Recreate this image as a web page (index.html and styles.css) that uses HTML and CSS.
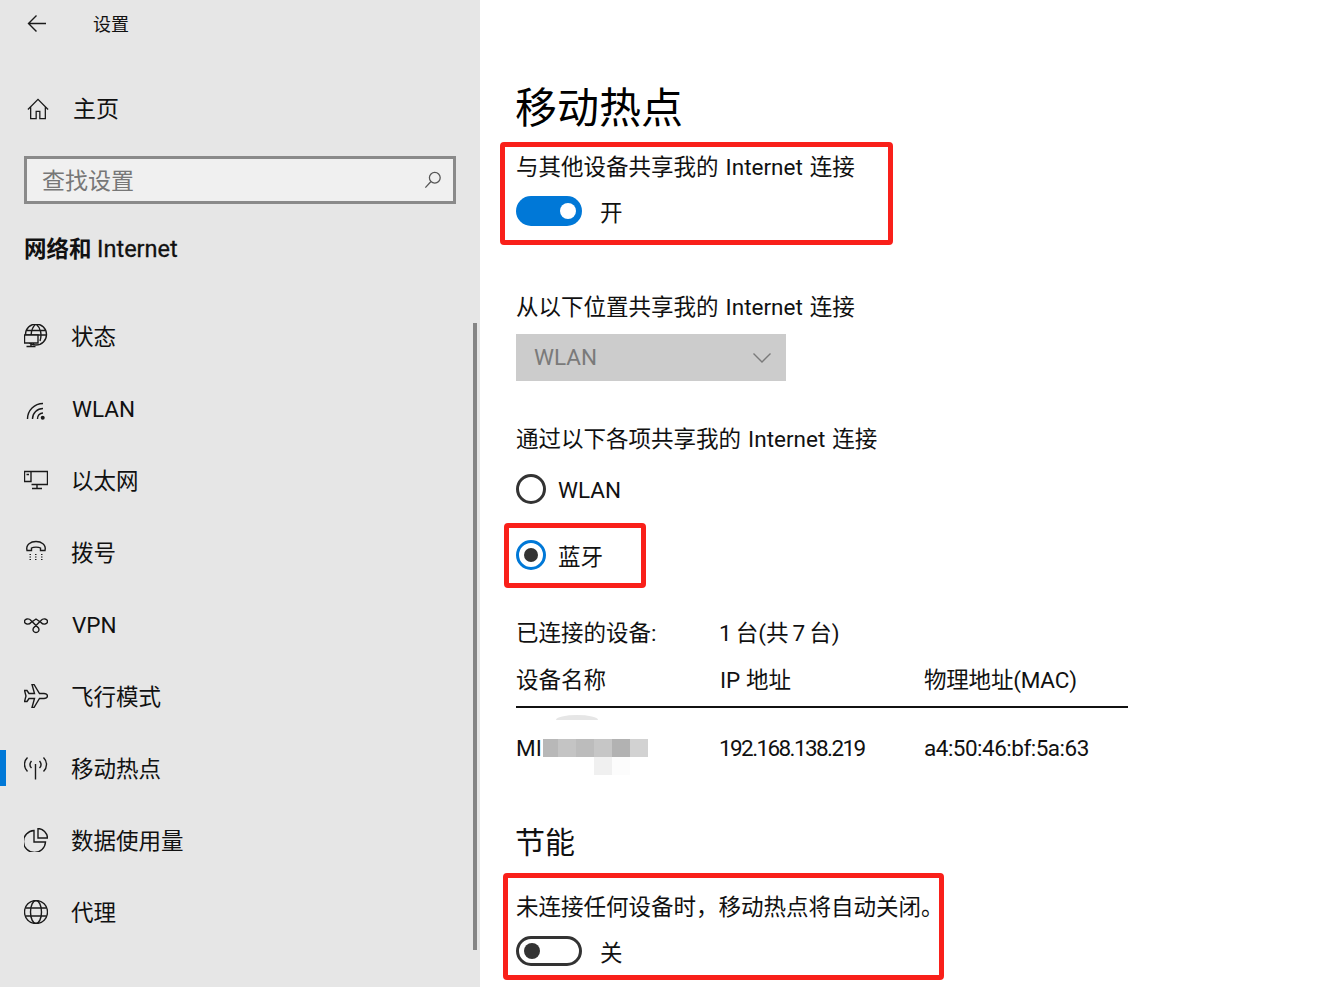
FILE: index.html
```html
<!DOCTYPE html>
<html lang="zh-CN">
<head>
<meta charset="utf-8">
<title>设置</title>
<link rel="stylesheet" href="styles.css">
</head>
<body>
<div class="app">
  <aside class="sidebar">
    <div class="topbar">
      <svg class="back" viewBox="0 0 20 20"><path d="M19 9.500H1.500M9.500 1.500l-8 8 8 8"/></svg>
      <span class="top-title">设置</span>
    </div>
    <div class="home">
      <svg class="icon" viewBox="0 0 24 24"><path d="M1 12.500L12 1.500l11 11M4 9.500v13h6v-8h4v8h6v-13"/></svg>
      <span>主页</span>
    </div>
    <div class="search">
      <span class="placeholder">查找设置</span>
      <svg class="search-icon" viewBox="0 0 20 20"><circle cx="12" cy="7.500" r="6"/><path d="M7.500 12L1.500 18.500"/></svg>
    </div>
    <div class="section">网络和 <span class="section-latin">Internet</span></div>
    <nav class="nav">
      <div class="nav-item">
        <svg class="icon" viewBox="0 0 24 24"><circle cx="12" cy="10.500" r="10.500"/><path d="M12 0c-6 5-6 14-2 21M12 0c5 4 6 11 4 17M2 6.500h20M1.500 11h21"/><path class="bg" d="M.5 11H14v8H.5z"/><path d="M7 19v3.500M2.500 22.500h9"/></svg>
        <span>状态</span>
      </div>
      <div class="nav-item">
        <svg class="icon wifi" viewBox="0 0 24 24"><circle class="solid" cx="18.700" cy="18.700" r="2"/><path d="M13.500 20a5.500 5.500 0 0 1 5.500-6M8.500 20A10.500 10.500 0 0 1 19 9.500M3.500 20A15.500 15.500 0 0 1 19 4.500"/></svg>
        <span class="latin">WLAN</span>
      </div>
      <div class="nav-item">
        <svg class="icon" viewBox="0 0 24 24"><path d="M7 3.500h16.500v13H7.500M.5 3.500h6.500v10H.5zM13 16.500v4M8 20.500h10M2.500 6.500h2.500"/></svg>
        <span>以太网</span>
      </div>
      <div class="nav-item">
        <svg class="icon" viewBox="0 0 24 24"><path d="M3 10.500C1.500 4.500 7 1.500 12 1.500s10.500 3 9 9h-4.500V8c-2-1.200-7-1.200-9 0v2.500z"/><path class="dots" d="M5.500 14.500h1.500M11 14.500h1.500M17 14.500h1.500M5.500 17h1.500M11 17h1.500M17 17h1.500M5.500 19.500h1.500M11 19.500h1.500M17 19.500h1.500"/></svg>
        <span>拨号</span>
      </div>
      <div class="nav-item">
        <svg class="icon" viewBox="0 0 24 24"><path d="M7 8.500c-2-2.500-6.500-2-6.500 1s4.500 3.500 6.500 1l5-3.500 5 3.500c2 2.500 6.500 2 6.500-1s-4.500-3.500-6.500-1L9.500 16c-1.500 3 1 4.500 2.500 4.500s4-1.500 2.500-4.500z"/></svg>
        <span class="latin">VPN</span>
      </div>
      <div class="nav-item">
        <svg class="icon" viewBox="0 0 24 24"><path d="M23.500 12c0-1.500-2-2.500-3.500-2.500h-4.500L10 .5H8l2.500 9H5L3 6.500H.5L2 12 .5 17.500H3L5 14.500h5.500l-2.500 9h2l5.500-9H20c1.500 0 3.500-1 3.500-2.500z"/></svg>
        <span>飞行模式</span>
      </div>
      <div class="nav-item current">
        <svg class="icon" viewBox="0 0 24 24"><path d="M11.500 8v15.500M3.500 1.500c-4 4-4 10 0 14M19.500 1.500c4 4 4 10 0 14M7.500 5c-2 2.500-2 5 0 7M15.500 5c2 2.500 2 5 0 7"/></svg>
        <span>移动热点</span>
      </div>
      <div class="nav-item">
        <svg class="icon" viewBox="0 0 24 24"><path d="M10 2.500a11 11 0 1 0 11.500 11.500H10zM14 .5v9.500h9.500A10 10 0 0 0 14 .5z"/></svg>
        <span>数据使用量</span>
      </div>
      <div class="nav-item">
        <svg class="icon" viewBox="0 0 24 24"><circle cx="12" cy="12" r="11.500"/><ellipse cx="12" cy="12" rx="5.500" ry="11.500"/><path d="M1.500 8h21M1.500 16h21"/></svg>
        <span>代理</span>
      </div>
    </nav>
    <div class="scrollbar"></div>
  </aside>

  <main class="main">
    <h1 class="title">移动热点</h1>
    <div class="label intro">与其他设备共享我的 Internet 连接</div>
    <div class="toggle-row">
      <span class="toggle on"></span>
      <span>开</span>
    </div>
    <div class="label from">从以下位置共享我的 Internet 连接</div>
    <div class="select">
      <span class="select-text">WLAN</span>
      <svg class="chevron" viewBox="0 0 18 10"><path d="M.5.500L9 9l8.500-8.500"/></svg>
    </div>
    <div class="label via">通过以下各项共享我的 Internet 连接</div>
    <div class="radio-row first"><span class="radio"></span><span class="radio-text">WLAN</span></div>
    <div class="radio-row second"><span class="radio checked"></span><span>蓝牙</span></div>
    <div class="grid summary"><span>已连接的设备:</span><span class="count">1 台(共 7 台)</span></div>
    <div class="grid head"><span>设备名称</span><span>IP 地址</span><span class="mac-head">物理地址(MAC)</span></div>
    <div class="grid device">
      <span class="device-name">MI<span class="mosaic"><i class="m1"></i><i class="m2"></i><i class="m3"></i><i class="m4"></i><i class="m5"></i><i class="m6"></i></span><span class="mosaic-low"><i class="m7"></i><i class="m8"></i></span><span class="mosaic-top"></span></span>
      <span class="ip">192.168.138.219</span>
      <span class="mac">a4:50:46:bf:5a:63</span>
    </div>
    <h2 class="subtitle">节能</h2>
    <div class="label saver">未连接任何设备时，移动热点将自动关闭。</div>
    <div class="toggle-row">
      <span class="toggle off"></span>
      <span>关</span>
    </div>
  </main>
</div>
<div class="mark mark-one"></div>
<div class="mark mark-two"></div>
<div class="mark mark-three"></div>
</body>
</html>
```

FILE: styles.css
```css
* { box-sizing: border-box; }
html, body { margin: 0; height: 987px; overflow: hidden; background: #fff; }
body {
  position: relative;
  font-family: Roboto, "Noto Sans CJK SC", sans-serif;
  font-size: 22.500px;
  color: #111;
}
svg { display: block; fill: none; stroke: #1a1a1a; stroke-width: 1.400; flex: none; }
.app { display: flex; height: 987px; }

.sidebar { position: relative; width: 480px; flex: none; background: #e6e6e6; }
.topbar { display: flex; align-items: center; height: 50px; padding-left: 27px; }
.back { width: 20px; height: 20px; margin-top: -2px; }
.top-title { margin-left: 46px; font-size: 18px; line-height: 50px; height: 50px; }
.home { display: flex; align-items: center; height: 36px; margin-top: 41px; padding-left: 27px; font-size: 23px; }
.home span { margin-top: -4px; }
.home .icon { width: 22px; height: 22px; margin-right: 24px; }
.search {
  display: flex; align-items: center; justify-content: space-between;
  width: 432px; height: 48px; margin: 29px 0 0 24px; padding: 0 11px 0 15px;
  background: #f0f0f0; border: 3px solid #8a8a8a;
}
.placeholder { color: #777; font-size: 23px; margin-top: -2px; }
.search-icon { width: 18px; height: 18px; stroke: #555; }
.section { height: 40px; margin: 25px 0 0 24px; font-weight: 700; line-height: 40px; }
.section-latin { font-size: 23.500px; font-weight: 400; -webkit-text-stroke: .300px #111; }
.nav { margin-top: 32px; }
.nav-item { position: relative; display: flex; align-items: center; height: 72px; padding-left: 24px; }
.nav-item span { margin-top: -4px; margin-left: -1px; }
.nav-item .latin { margin-top: -1px; margin-left: 0; }
.nav-item .icon { width: 24px; height: 24px; margin-right: 24px; margin-top: -2px; }
.nav-item .wifi { margin-top: 4px; }
.current::before { content: ""; position: absolute; left: 0; top: 17px; width: 6px; height: 36px; background: #0078d7; }
.bg { fill: #e6e6e6; }
.solid { fill: #1a1a1a; stroke: none; }
.dots { stroke-width: 1; }
.scrollbar { position: absolute; right: 3px; top: 323px; width: 4px; height: 627px; background: #858585; }

.main { flex: 1; padding: 82px 0 0 36px; }
.title { height: 50px; margin: 0 0 0 -1px; font-size: 42px; font-weight: 400; line-height: 54px; color: #000; }
.label { height: 30px; line-height: 30px; white-space: nowrap; word-spacing: 1.500px; }
.intro { margin-top: 20px; }
.from { margin-top: 66px; }
.via { margin-top: 43px; }
.saver { margin-top: 29px; }
.toggle-row { display: flex; align-items: center; height: 30px; margin-top: 14px; gap: 18px; }
.toggle { position: relative; width: 66px; height: 30px; border-radius: 15px; }
.toggle::after { content: ""; position: absolute; top: 7px; width: 16px; height: 16px; border-radius: 50%; }
.on { background: #0078d7; }
.on::after { right: 6px; background: #fff; }
.off { border: 3px solid #333; }
.off::after { left: 5px; top: 4px; background: #333; }
.select {
  display: flex; align-items: center; justify-content: space-between;
  width: 270px; height: 47px; margin-top: 12px; padding: 0 15px 0 18px;
  background: #cccccc; color: #7a7a7a;
}
.select-text { margin-top: -2px; }
.chevron { width: 18px; height: 10px; stroke: #7a7a7a; }
.radio-row { display: flex; align-items: center; height: 30px; gap: 12px; }
.radio-text { margin-top: 2px; }
.first { margin-top: 20px; }
.second { margin-top: 36px; }
.radio { position: relative; width: 30px; height: 30px; border: 3px solid #333; border-radius: 50%; }
.checked { border-color: #0078d7; }
.checked::after { content: ""; position: absolute; left: 5px; top: 5px; width: 14px; height: 14px; border-radius: 50%; background: #333; }
.grid { display: grid; grid-template-columns: 204px 204px 204px; width: 612px; line-height: 30px; white-space: nowrap; }
.summary { margin-top: 48px; }
.count { word-spacing: -1.500px; margin-left: -1px; }
.head { margin-top: 17px; padding-bottom: 11px; border-bottom: 2px solid #111; height: 43px; }
.mac-head { letter-spacing: -.200px; }
.device { margin-top: 25px; height: 30px; }
.ip { letter-spacing: -1.600px; margin-left: -1px; }
.mac { letter-spacing: -.500px; }
.device-name { position: relative; display: flex; align-items: center; }
.mosaic { display: flex; margin-left: 1px; }
.mosaic i { display: block; width: 18px; height: 18px; }
.m1 { background: #b8b8b8; width: 15px !important; }
.m2 { background: #c4c4c4; }
.m3 { background: #bcbcbc; }
.m4 { background: #c6c6c6; }
.m5 { background: #b2b2b2; }
.m6 { background: #d2d2d2; }
.mosaic-low { position: absolute; left: 78px; top: 24px; display: flex; }
.mosaic-low i { display: block; width: 18px; height: 18px; }
.m7 { background: #f0f0f0; }
.m8 { background: #fcfcfc; }
.mosaic-top { position: absolute; left: 40px; top: -18px; width: 42px; height: 5px; background: #e6e6e6; border-radius: 50% 50% 0 0 / 100% 100% 0 0; }
.subtitle { height: 40px; margin: 60px 0 0 -1px; font-size: 30px; font-weight: 400; line-height: 40px; color: #111; }

.mark { position: absolute; border: 5px solid #f9201a; border-radius: 4px; }
.mark-one { left: 500px; top: 142px; width: 393px; height: 103px; }
.mark-two { left: 504px; top: 523px; width: 142px; height: 65px; }
.mark-three { left: 503px; top: 873px; width: 441px; height: 107px; }
```
